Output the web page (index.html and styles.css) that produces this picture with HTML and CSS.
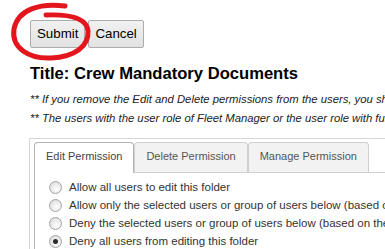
FILE: index.html
```html
<!DOCTYPE html>
<html lang="en">
<head>
<meta charset="utf-8">
<title>Folder permissions</title>
<link rel="stylesheet" href="styles.css">
</head>
<body>
<div class="page">
  <div class="actions">
    <button class="btn" type="button">Submit</button>
    <button class="btn" type="button">Cancel</button>
  </div>
  <svg class="mark" width="100" height="64" viewBox="0 0 100 64" aria-hidden="true">
    <path d="M65 6 C40 3, 18 9, 14 29 C11 48, 29 59, 51 58 C75 57, 89 46, 88 31 C87 19, 72 14, 46 15" fill="none" stroke="#e3161d" stroke-width="5" stroke-linecap="round"/>
  </svg>
  <h1 class="title">Title: Crew Mandatory Documents</h1>
  <p class="note">** If you remove the Edit and Delete permissions from the users, you should also remove the Manage permission</p>
  <p class="note">** The users with the user role of Fleet Manager or the user role with full access will always have permissions</p>
  <div class="box">
    <div class="tabs">
      <div class="tab active">Edit Permission</div>
      <div class="tab">Delete Permission</div>
      <div class="tab">Manage Permission</div>
    </div>
    <div class="panel">
      <div class="row"><span class="radio"></span><span class="label">Allow all users to edit this folder</span></div>
      <div class="row"><span class="radio"></span><span class="label">Allow only the selected users or group of users below (based on their user role)</span></div>
      <div class="row"><span class="radio"></span><span class="label">Deny the selected users or group of users below (based on their user role)</span></div>
      <div class="row"><span class="radio checked"></span><span class="label">Deny all users from editing this folder</span></div>
    </div>
  </div>
</div>
</body>
</html>
```
FILE: styles.css
```css
html, body {
  margin: 0;
  padding: 0;
  overflow: hidden;
  background: #fff;
}
body {
  font-family: "Liberation Sans", Arial, sans-serif;
  color: #000;
}
.page {
  position: relative;
  width: 800px;
  padding: 20px 0 0 30px;
}
.actions {
  display: flex;
  gap: 3px;
}
.btn {
  font-family: "Liberation Sans", Arial, sans-serif;
  font-size: 13.3px;
  line-height: 16px;
  height: 28px;
  padding: 5px 6px;
  color: #000;
  background: linear-gradient(#f1f1f1, #e2e2e2);
  border: 1px solid #adadad;
  border-radius: 2px;
  margin: 0;
}
.mark {
  position: absolute;
  left: 0;
  top: 0;
  pointer-events: none;
}
.title {
  margin: 16px 0 0;
  font-size: 16.6px;
  line-height: 19px;
  font-weight: bold;
  white-space: nowrap;
}
.title + .note {
  margin-top: 7px;
}
.note {
  margin: 0;
  font-size: 11.3px;
  line-height: 19px;
  font-style: italic;
  color: #222;
  white-space: nowrap;
}
.box {
  margin: 10px 0 0 -1px;
  border: 1px solid #d6d6d6;
  padding: 3px 0 0 4px;
  height: 200px;
}
.tabs {
  display: flex;
  align-items: flex-end;
}
.tab {
  font-size: 11px;
  line-height: 13px;
  padding: 7px 11px 9px;
  border: 1px solid #cfcfcf;
  border-bottom: none;
  border-radius: 4px 4px 0 0;
  background: #f2f2f2;
  color: #555;
  white-space: nowrap;
}
.tab.active {
  background: #fff;
  border-color: #b4b4b4;
  color: #444;
  padding-bottom: 10px;
  margin-bottom: -1px;
  position: relative;
}
.panel {
  border-top: 1px solid #cfcfcf;
  border-left: 1px solid #b4b4b4;
  padding: 5px 0 0 14px;
}
.row {
  display: flex;
  align-items: center;
  height: 18px;
  gap: 7px;
}
.radio {
  flex: none;
  width: 11px;
  height: 11px;
  border: 1px solid #a4a4a4;
  border-radius: 50%;
  background: radial-gradient(circle at 60% 65%, #ffffff 0%, #ececec 45%, #d4d4d4 100%);
  position: relative;
}
.radio.checked::after {
  content: "";
  position: absolute;
  left: 3px;
  top: 3px;
  width: 5px;
  height: 5px;
  border-radius: 50%;
  background: #2c2c2c;
}
.label {
  font-size: 11.5px;
  color: #333;
  white-space: nowrap;
}
```
